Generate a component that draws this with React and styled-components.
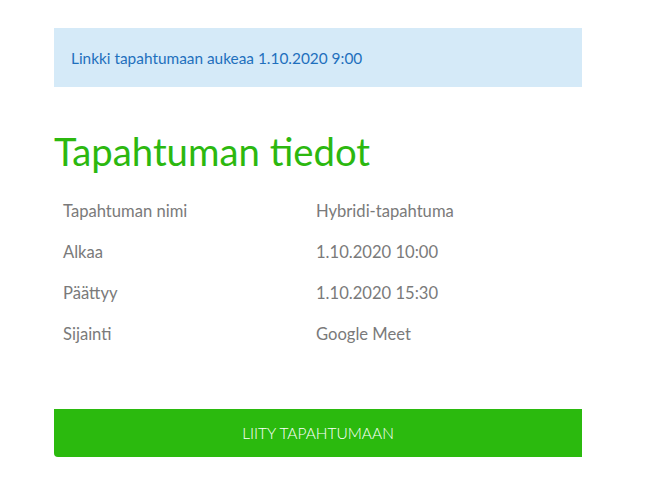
import React from 'react'
import styled, { createGlobalStyle } from 'styled-components'

const Global = createGlobalStyle`
  body {
    margin: 0;
    background: #fff;
    font-family: Lato, "Open Sans", sans-serif;
  }
`

const Page = styled.div`
  width: 528px;
  padding: 28px 0 0 54px;
`

const Notice = styled.div`
  background: #d5eaf8;
  color: #1f70bd;
  font-size: 15.4px;
  height: 59px;
  display: flex;
  align-items: center;
  padding: 0 17px;
`

const Heading = styled.h2`
  margin: 42px 0 17px;
  color: #2cb80f;
  font-size: 38.3px;
  font-weight: 400;
  line-height: 44px;
`

const Table = styled.div`
  display: grid;
  grid-template-columns: 253px 1fr;
  padding-left: 9px;
`

const Cell = styled.div`
  color: #7a7a7a;
  font-size: 16.6px;
  height: 41px;
  display: flex;
  align-items: center;
`

const JoinButton = styled.button`
  display: block;
  width: 100%;
  height: 48px;
  margin-top: 55px;
  border: 0;
  border-radius: 0 0 0 4px;
  background: #2bba0e;
  color: #fff;
  font-family: inherit;
  font-size: 15.5px;
  font-weight: 300;
  cursor: pointer;
`

const rows = [
  ['Tapahtuman nimi', 'Hybridi-tapahtuma'],
  ['Alkaa', '1.10.2020 10:00'],
  ['Päättyy', '1.10.2020 15:30'],
  ['Sijainti', 'Google Meet'],
]

const App = () => {
  return (
    <Page>
      <Global />
      <Notice>Linkki tapahtumaan aukeaa 1.10.2020 9:00</Notice>
      <Heading>Tapahtuman tiedot</Heading>
      <Table>
        {rows.map(([k, v]) => (
          <React.Fragment key={k}>
            <Cell>{k}</Cell>
            <Cell>{v}</Cell>
          </React.Fragment>
        ))}
      </Table>
      <JoinButton>LIITY TAPAHTUMAAN</JoinButton>
    </Page>
  )
}

export default App
